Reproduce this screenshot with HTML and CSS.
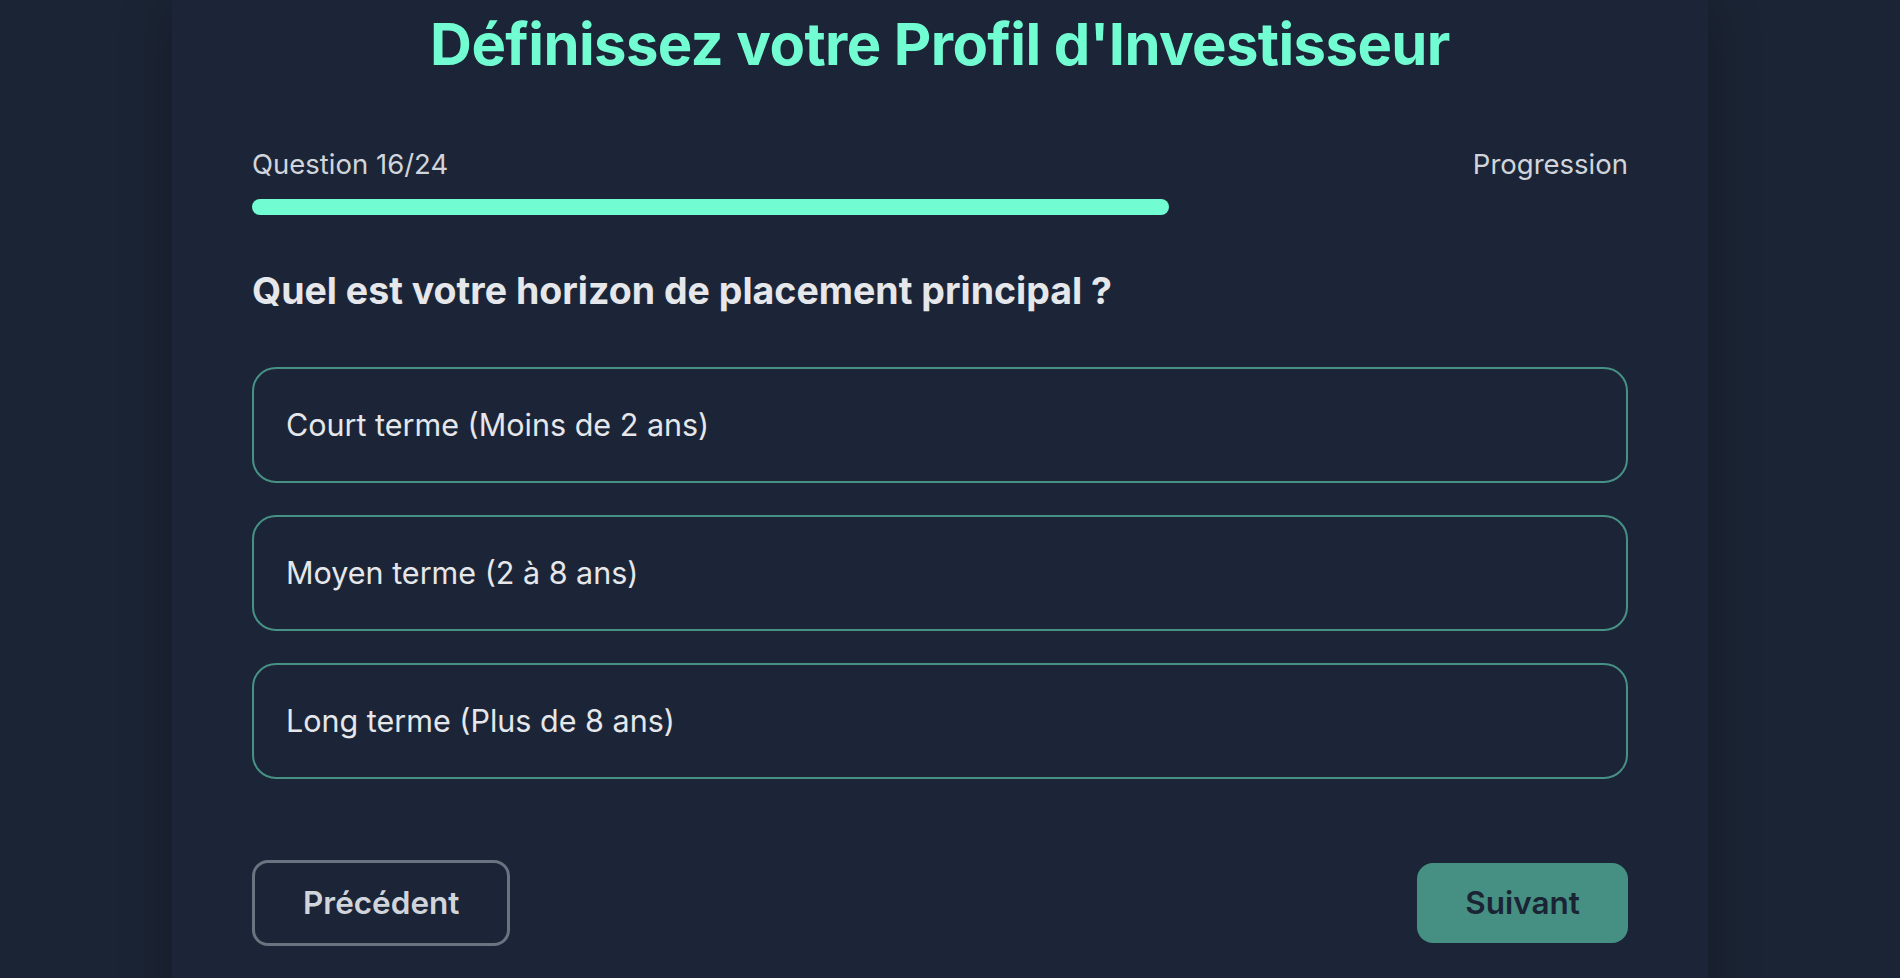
FILE: index.html
```html
<!DOCTYPE html>
<html lang="fr">
<head>
<meta charset="utf-8">
<title>Profil d'Investisseur</title>
<link rel="stylesheet" href="styles.css">
</head>
<body>
<div class="page">
  <main class="card">
    <h1 class="title">Définissez votre Profil d'Investisseur</h1>
    <div class="progress-head">
      <span>Question 16/24</span>
      <span>Progression</span>
    </div>
    <div class="progress-track"><div class="progress-fill" style="width:66.67%"></div></div>
    <h2 class="question">Quel est votre horizon de placement principal ?</h2>
    <div class="options">
      <button class="option">Court terme (Moins de 2 ans)</button>
      <button class="option">Moyen terme (2 à 8 ans)</button>
      <button class="option">Long terme (Plus de 8 ans)</button>
    </div>
    <div class="nav">
      <button class="btn btn-prev">Précédent</button>
      <button class="btn btn-next">Suivant</button>
    </div>
  </main>
</div>
</body>
</html>
```
FILE: styles.css
```css
html, body {
  margin: 0;
  height: 100%;
  background: #1b2434;
  overflow: hidden;
}
body {
  font-family: Inter, "Noto Sans", sans-serif;
}
.page {
  width: 1880px;
  display: flex;
  justify-content: center;
}
.card {
  width: 1536px;
  box-sizing: border-box;
  padding: 8px 80px 80px;
  background: #1c2537;
  box-shadow: 0 0 50px rgba(0, 0, 0, 0.22);
  min-height: 1100px;
}
.title {
  margin: 0 0 64px;
  font-size: 58px;
  line-height: 72px;
  font-weight: 700;
  letter-spacing: -0.6px;
  color: #72fcd1;
  text-align: center;
}
.progress-head {
  display: flex;
  justify-content: space-between;
  font-size: 27.5px;
  line-height: 40px;
  color: #d1d5db;
  margin-bottom: 15px;
}
.progress-track {
  height: 16px;
  border-radius: 8px;
  margin-bottom: 48px;
}
.progress-fill {
  height: 100%;
  background: #72fcd1;
  border-radius: 8px;
}
.question {
  margin: 0 0 48px;
  font-size: 37.5px;
  line-height: 56px;
  font-weight: 700;
  color: #e5e7eb;
}
.options {
  display: flex;
  flex-direction: column;
  gap: 32px;
}
.option {
  text-align: left;
  background: transparent;
  border: 2px solid rgba(114, 252, 209, 0.5);
  border-radius: 24px;
  padding: 32px;
  font-family: inherit;
  font-size: 30.5px;
  line-height: 48px;
  color: #e5e7eb;
}
.nav {
  display: flex;
  justify-content: space-between;
  align-items: center;
  margin-top: 81px;
}
.btn {
  font-family: inherit;
  font-size: 31.5px;
  line-height: 48px;
  font-weight: 600;
  padding: 16px 48px;
  border-radius: 16px;
}
.btn-prev {
  background: transparent;
  border: 3px solid #6b7280;
  color: #d1d5db;
}
.btn-next {
  background: #469083;
  border: none;
  color: #1b2435;
}
```
